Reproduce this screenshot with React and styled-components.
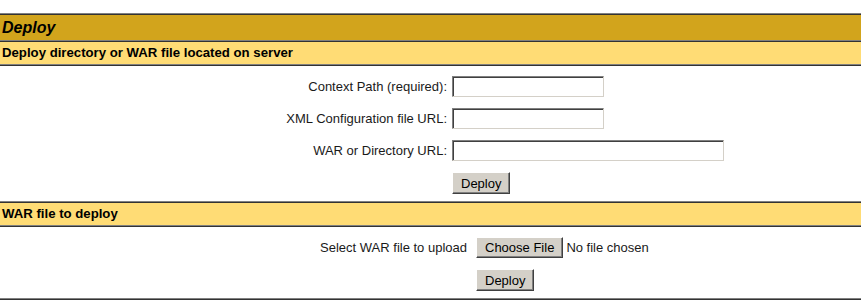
import React from 'react';
import styled, { createGlobalStyle } from 'styled-components';

const GlobalStyle = createGlobalStyle`
    html, body {
        margin: 0;
        padding: 0;
        background: #ffffff;
    }

    body {
        font-family: "Liberation Sans", Arial, sans-serif;
        font-size: 13px;
        color: #000000;
    }
`;

const Page = styled.div`
    width: 861px;
    height: 301px;
    overflow: hidden;
    padding-top: 13px;
    box-sizing: border-box;
`;

const Table = styled.div`
    border-top: 1px solid #808080;
    border-bottom: 1px solid #333333;
`;

const Cell = styled.div`
    border-top: 1px solid #333333;
    border-bottom: 1px solid #808080;
`;

const TitleCell = styled(Cell)`
    height: 25px;
    line-height: 25px;
    padding-left: 2px;

    background: #d2a41c;

    font-size: 16px;
    font-weight: bold;
    font-style: italic;
`;

const HeaderCell = styled(Cell)`
    height: 22px;
    line-height: 22px;
    padding-left: 2px;

    background: #ffdc75;

    font-size: 13.2px;
    font-weight: bold;
`;

const BodyCell = styled(Cell)`
    padding: ${(p) => p.$top}px 0 ${(p) => p.$bottom}px;
    background: #ffffff;
`;

const FormGrid = styled.div`
    display: grid;
    grid-template-columns: ${(p) => p.$labelWidth}px auto;
    column-gap: ${(p) => p.$gap}px;
    row-gap: 11px;
    align-items: center;
    margin-left: ${(p) => p.$offset}px;
`;

const Label = styled.div`
    text-align: right;
    white-space: nowrap;
    color: #1a1a1a;
`;

const Control = styled.div`
    display: flex;
    align-items: center;
    gap: 3px;
`;

const TextInput = styled.input`
    box-sizing: border-box;
    width: ${(p) => p.$width}px;
    height: 21px;
    margin: 0;
    padding: 1px 2px;

    border-top: 1px solid #808080;
    border-left: 1px solid #808080;
    border-right: 1px solid #d4d0c8;
    border-bottom: 1px solid #d4d0c8;
    box-shadow: inset 1px 1px 0 #404040;
    background: #ffffff;

    font-family: "Liberation Sans", Arial, sans-serif;
    font-size: 13px;
    outline: none;
`;

const Button = styled.button`
    box-sizing: border-box;
    height: ${(p) => p.$height || 22}px;
    margin: 0;
    padding: 0 8px;

    border-top: 1px solid #ffffff;
    border-left: 1px solid #ffffff;
    border-right: 1px solid #404040;
    border-bottom: 1px solid #404040;
    box-shadow: inset -1px -1px 0 #808080;
    background: #d4d0c8;

    font-family: "Liberation Sans", Arial, sans-serif;
    font-size: 13px;
    color: #000000;
`;

const FileText = styled.span`
    white-space: nowrap;
    color: #1a1a1a;
`;

export default function App() {
    return (
        <Page>
            <GlobalStyle />
            <Table>
                <TitleCell>Deploy</TitleCell>
                <HeaderCell>Deploy directory or WAR file located on server</HeaderCell>
                <BodyCell $top={10} $bottom={7}>
                    <FormGrid $offset={282} $labelWidth={165} $gap={5}>
                        <Label>Context Path (required):</Label>
                        <Control>
                            <TextInput $width={152} />
                        </Control>
                        <Label>XML Configuration file URL:</Label>
                        <Control>
                            <TextInput $width={152} />
                        </Control>
                        <Label>WAR or Directory URL:</Label>
                        <Control>
                            <TextInput $width={272} />
                        </Control>
                        <div />
                        <Control>
                            <Button>Deploy</Button>
                        </Control>
                    </FormGrid>
                </BodyCell>
                <HeaderCell>WAR file to deploy</HeaderCell>
                <BodyCell $top={10} $bottom={7}>
                    <FormGrid $offset={316} $labelWidth={151} $gap={9}>
                        <Label>Select WAR file to upload</Label>
                        <Control>
                            <Button $height={21}>Choose File</Button>
                            <FileText>No file chosen</FileText>
                        </Control>
                        <div />
                        <Control>
                            <Button>Deploy</Button>
                        </Control>
                    </FormGrid>
                </BodyCell>
            </Table>
        </Page>
    );
}
